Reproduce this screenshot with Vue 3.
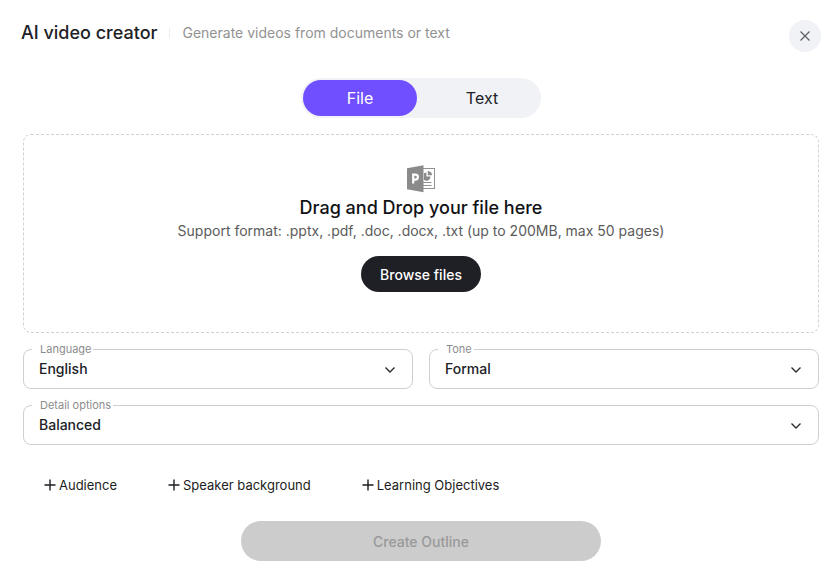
<script setup>
import { ref } from 'vue'

const mode = ref('File')
const modes = ['File', 'Text']

const fields = ref([
  { id: 'language', label: 'Language', value: 'English', options: ['English', 'French', 'German', 'Spanish'] },
  { id: 'tone', label: 'Tone', value: 'Formal', options: ['Formal', 'Casual', 'Friendly'] },
  { id: 'detail', label: 'Detail options', value: 'Balanced', options: ['Brief', 'Balanced', 'Detailed'], wide: true },
])

const extras = ['Audience', 'Speaker background', 'Learning Objectives']
</script>

<template>
  <div class="creator">
    <header class="header">
      <div class="heading">
        <h1 class="title">AI video creator</h1>
        <p class="subtitle">Generate videos from documents or text</p>
      </div>
      <button class="close" type="button" aria-label="Close">
        <svg width="10" height="10" viewBox="0 0 10 10" fill="none" stroke="#5c5d61" stroke-width="1.2">
          <path d="M0.5 0.5 9.5 9.5M9.5 0.5 0.5 9.5" />
        </svg>
      </button>
    </header>

    <main class="body">
      <div class="tabs" role="tablist">
        <button
          v-for="item in modes"
          :key="item"
          class="tab"
          :class="{ active: mode === item }"
          type="button"
          role="tab"
          :aria-selected="mode === item"
          @click="mode = item"
        >{{ item }}</button>
      </div>

      <section class="dropzone">
        <svg class="doc-icon" width="28" height="28" viewBox="0 0 28 28">
          <rect x="15" y="3.5" width="12.5" height="20" fill="#fff" stroke="#929292" />
          <path d="M19.4 7.4v4.2h4.2a4.2 4.2 0 0 1-6.6 3.4V8.2a4.2 4.2 0 0 1 2.4-0.8z" fill="#8a8a8a" />
          <path d="M20.8 6a4.2 4.2 0 0 1 4.2 4.2h-4.2z" fill="#8a8a8a" />
          <path d="M16 17.5h8.5M16 20.5h8.5" stroke="#929292" />
          <path d="M0 3.2 16.5 0.3V27.2L0 24.3z" fill="#8a8a8a" />
          <path d="M6.2 18.5V9.6H8.4a2.5 2.5 0 0 1 0 5H6.2" fill="none" stroke="#fff" stroke-width="2.2" />
        </svg>
        <h2 class="drop-title">Drag and Drop your file here</h2>
        <p class="drop-hint">Support format: .pptx, .pdf, .doc, .docx, .txt (up to 200MB, max 50 pages)</p>
        <button class="browse" type="button">Browse files</button>
      </section>

      <form class="form" @submit.prevent>
        <div class="fields">
          <fieldset v-for="field in fields" :key="field.id" class="field" :class="{ wide: field.wide }">
            <legend class="legend"><label :for="field.id">{{ field.label }}</label></legend>
            <div class="control">
              <select :id="field.id" v-model="field.value" class="select">
                <option v-for="option in field.options" :key="option">{{ option }}</option>
              </select>
              <svg class="chevron" width="10" height="6" viewBox="0 0 10 6" fill="none" stroke="#2b2c30" stroke-width="1.4">
                <path d="M0.5 0.5 5 5 9.5 0.5" />
              </svg>
            </div>
          </fieldset>
        </div>

        <div class="extras">
          <button v-for="extra in extras" :key="extra" class="extra" type="button">
            <svg width="12" height="12" viewBox="0 0 12 12" fill="none" stroke="#1c1d21" stroke-width="1.4">
              <path d="M6 0.5v11M0.5 6h11" />
            </svg>
            <span>{{ extra }}</span>
          </button>
        </div>

        <button class="create" type="submit" disabled>Create Outline</button>
      </form>
    </main>
  </div>
</template>

<style>
body {
  margin: 0;
  background: #fff;
}
</style>

<style scoped>
.creator {
  font-family: Inter, "Liberation Sans", sans-serif;
  color: #202126;
  padding: 20px 19px 18px 20px;
}

button,
select {
  font-family: inherit;
  border: 0;
  padding: 0;
  cursor: pointer;
}

.header {
  display: flex;
  justify-content: space-between;
  align-items: flex-start;
}

.heading {
  display: flex;
  align-items: center;
  gap: 12px;
  padding-left: 1px;
}

.title {
  margin: 0;
  font-size: 18px;
  line-height: 26px;
  font-weight: 500;
}

.subtitle {
  margin: 0;
  padding-left: 12px;
  border-left: 1px solid #eeeeef;
  font-size: 14px;
  line-height: 10px;
  color: #929292;
}

.close {
  display: flex;
  align-items: center;
  justify-content: center;
  width: 32px;
  height: 32px;
  border-radius: 50%;
  background: #f1f2f6;
}

.body {
  display: flex;
  flex-direction: column;
  padding: 26px 2px 0 3px;
}

.tabs {
  display: flex;
  align-self: center;
  padding: 2px;
  border-radius: 20px;
  background: #f1f2f6;
}

.tab {
  width: 114px;
  height: 36px;
  border-radius: 18px;
  background: transparent;
  font-size: 16px;
  color: #202126;
}

.tab + .tab {
  margin-left: 8px;
}

.tab.active {
  background: #6f4fff;
  color: #fff;
}

.dropzone {
  display: flex;
  flex-direction: column;
  align-items: center;
  margin-top: 16px;
  padding: 30px 20px 40px;
  border: 1px dashed #d2d2d2;
  border-radius: 8px;
}

.drop-title {
  margin: 3px 0 0;
  font-size: 18px;
  line-height: 24px;
  font-weight: 500;
  color: #111215;
}

.drop-hint {
  margin: 0;
  font-size: 14px;
  line-height: 22px;
  color: #5b5b5b;
}

.browse {
  margin-top: 14px;
  padding: 0 19px;
  height: 36px;
  border-radius: 18px;
  background: #1f2025;
  color: #fff;
  font-size: 14px;
  font-weight: 500;
}

.form {
  display: flex;
  flex-direction: column;
  margin-top: 8px;
}

.fields {
  display: grid;
  grid-template-columns: 1fr 1fr;
  gap: 8px 16px;
}

.field {
  min-width: 0;
  margin: 0;
  padding: 0;
  border: 1px solid #cfcfcf;
  border-radius: 8px;
}

.field.wide {
  grid-column: 1 / -1;
}

.legend {
  margin-left: 8px;
  padding: 0 2px 0 8px;
  font-size: 11px;
  line-height: 16px;
  color: #8c8c8c;
}

.control {
  display: flex;
  align-items: center;
  position: relative;
}

.select {
  appearance: none;
  width: 100%;
  height: 31px;
  padding: 0 40px 8px 15px;
  border-radius: 8px;
  background: transparent;
  color: #202126;
  font-size: 14px;
  font-weight: 500;
}

.chevron {
  position: absolute;
  right: 17px;
  top: 10px;
  pointer-events: none;
}

.extras {
  display: flex;
  gap: 51px;
  margin-top: 28px;
  padding-left: 21px;
}

.extra {
  display: flex;
  align-items: center;
  gap: 3px;
  height: 24px;
  background: transparent;
  color: #1c1d21;
  font-size: 13px;
}

.create {
  align-self: center;
  width: 100%;
  max-width: 360px;
  height: 40px;
  margin-top: 24px;
  border-radius: 20px;
  background: #cccccc;
  color: #999999;
  font-size: 14px;
  font-weight: 500;
  cursor: default;
}
</style>
